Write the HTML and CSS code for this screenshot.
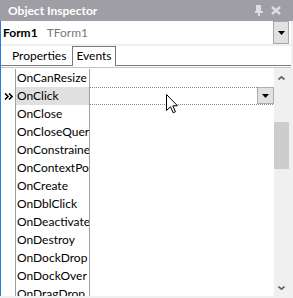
FILE: index.html
```html
<!DOCTYPE html>
<html lang="en">
<head>
    <meta charset="UTF-8">
    <title>Object Inspector</title>
    <link rel="stylesheet" href="styles.css">
</head>
<body>
    <div class="inspector">
        <div class="titlebar">
            <span class="title">Object Inspector</span>
            <div class="tools">
                <!-- pin -->
                <svg width="8" height="11" viewBox="0 0 8 11">
                    <rect x="1" y="0" width="5" height="6" fill="#dcdce0"/>
                    <rect x="0" y="6" width="8" height="2" fill="#dcdce0"/>
                    <rect x="3" y="8" width="2" height="3" fill="#dcdce0"/>
                </svg>
                <!-- close -->
                <svg width="10" height="9" viewBox="0 0 10 9">
                    <path d="M1 1 L9 8 M9 1 L1 8" stroke="#dcdce0" stroke-width="2.6" fill="none"/>
                </svg>
            </div>
        </div>
        <div class="body">
            <div class="combo">
                <span class="obj-name">Form1</span>
                <span class="obj-type">TForm1</span>
                <span class="drop">
                    <svg width="7" height="4" viewBox="0 0 7 4"><path d="M0 0 H7 L3.5 4 Z" fill="#000"/></svg>
                </span>
            </div>
            <div class="tabs">
                <span class="tab">Properties</span>
                <span class="tab active">Events</span>
            </div>
            <div class="grid-wrap">
                <div class="grid">
                    <div class="row"><span class="gutter"></span><span class="name">OnCanResize</span><span class="value"></span></div>
                    <div class="row selected">
                        <span class="gutter">
                            <svg width="9" height="7" viewBox="0 0 9 7"><path d="M1 0.5 L4 3.5 L1 6.5 M5 0.5 L8 3.5 L5 6.5" stroke="#000" stroke-width="1.6" fill="none"/></svg>
                        </span>
                        <span class="name">OnClick</span>
                        <span class="value">
                            <span class="value-drop">
                                <svg width="7" height="4" viewBox="0 0 7 4"><path d="M0 0 H7 L3.5 4 Z" fill="#000"/></svg>
                            </span>
                        </span>
                    </div>
                    <div class="row"><span class="gutter"></span><span class="name">OnClose</span><span class="value"></span></div>
                    <div class="row"><span class="gutter"></span><span class="name">OnCloseQuery</span><span class="value"></span></div>
                    <div class="row"><span class="gutter"></span><span class="name">OnConstrainedResize</span><span class="value"></span></div>
                    <div class="row"><span class="gutter"></span><span class="name">OnContextPopup</span><span class="value"></span></div>
                    <div class="row"><span class="gutter"></span><span class="name">OnCreate</span><span class="value"></span></div>
                    <div class="row"><span class="gutter"></span><span class="name">OnDblClick</span><span class="value"></span></div>
                    <div class="row"><span class="gutter"></span><span class="name">OnDeactivate</span><span class="value"></span></div>
                    <div class="row"><span class="gutter"></span><span class="name">OnDestroy</span><span class="value"></span></div>
                    <div class="row"><span class="gutter"></span><span class="name">OnDockDrop</span><span class="value"></span></div>
                    <div class="row"><span class="gutter"></span><span class="name">OnDockOver</span><span class="value"></span></div>
                    <div class="row"><span class="gutter"></span><span class="name">OnDragDrop</span><span class="value"></span></div>
                </div>
                <div class="scrollbar">
                    <span class="arrow up">
                        <svg width="7" height="4" viewBox="0 0 7 4"><path d="M0.5 3.5 L3.5 0.8 L6.5 3.5" stroke="#606060" stroke-width="1.6" fill="none"/></svg>
                    </span>
                    <span class="thumb"></span>
                    <span class="track"></span>
                    <span class="arrow down">
                        <svg width="7" height="4" viewBox="0 0 7 4"><path d="M0.5 0.5 L3.5 3.2 L6.5 0.5" stroke="#606060" stroke-width="1.6" fill="none"/></svg>
                    </span>
                </div>
            </div>
        </div>
        <!-- mouse pointer over the grid -->
        <svg class="cursor" width="13" height="20" viewBox="0 0 13 20">
            <path d="M0.5 0.5 L0.5 16.5 L4.5 12.8 L7.2 18.8 L9.4 17.8 L6.8 11.8 L11.5 11.8 Z" fill="#fff" stroke="#000" stroke-width="1"/>
        </svg>
    </div>
</body>
</html>
```

FILE: styles.css
```css
/* Panel utama */
body {
    margin: 0;
    font-family: Lato, "Noto Sans", sans-serif;
    font-size: 12px;
    color: #000;
}
.inspector {
    width: 293px;
    height: 298px;
    overflow: hidden;
    position: relative;
    background: #f0f0f0;
    display: flex;
    flex-direction: column;
}
/* Judul */
.titlebar {
    height: 21px;
    flex: none;
    background: #9f9ea5;
    color: #fff;
    display: flex;
    align-items: center;
    justify-content: space-between;
    padding: 0 12px 0 8px;
}
.title {
    font-weight: bold;
    font-size: 12px;
}
.tools {
    display: flex;
    align-items: center;
    gap: 8px;
}
.body {
    flex: 1;
    display: flex;
    flex-direction: column;
    border-left: 1px solid #2b7bd6;
    margin: 0 2px 2px 0;
    background: #fff;
    min-height: 0;
}
/* Combo objek */
.combo {
    height: 23px;
    flex: none;
    display: flex;
    align-items: center;
    padding-left: 2px;
    border-bottom: 2px solid #f0f0f0;
}
.obj-name {
    font-weight: bold;
    margin-right: 9px;
}
.obj-type {
    color: #777;
    flex: 1;
}
.drop {
    width: 14px;
    height: 21px;
    border: 1px solid #a8a8a8;
    background: #e1e1e1;
    margin-right: 2px;
    display: flex;
    align-items: center;
    justify-content: center;
}
/* Tab */
.tabs {
    height: 19px;
    flex: none;
    display: flex;
    align-items: flex-end;
    padding-left: 7px;
    border-bottom: 1px solid #7a7a7a;
}
.tab {
    padding: 0 4px;
    height: 18px;
    line-height: 17px;
    margin-right: 2px;
}
.tab.active {
    border: 1px solid #7a7a7a;
    border-bottom: none;
    background: #fff;
    padding: 0 3px;
    margin-bottom: -1px;
    height: 19px;
}
/* Grid properti */
.grid-wrap {
    flex: 1;
    display: flex;
    margin-top: 1px;
    border-top: 1px solid #c4c4c4;
    min-height: 0;
    overflow: hidden;
}
.grid {
    flex: 1;
    padding-top: 1px;
}
.row {
    display: flex;
    height: 18px;
}
.gutter {
    width: 14px;
    border-right: 1px solid #a0a0a0;
    display: flex;
    align-items: center;
    justify-content: center;
}
.name {
    width: 72px;
    padding-left: 1px;
    border-right: 1px solid #a0a0a0;
    overflow: hidden;
    white-space: nowrap;
    line-height: 17px;
}
.value {
    flex: 1;
    display: flex;
    justify-content: flex-end;
}
.selected .name {
    background: #e0e0e0;
}
.selected .value {
    background:
        linear-gradient(to right, #8a8a8a 50%, transparent 50%) top left / 2px 1px repeat-x,
        linear-gradient(to right, #8a8a8a 50%, transparent 50%) bottom left / 2px 1px repeat-x;
}
.value-drop {
    width: 15px;
    height: 15px;
    border: 1px solid #adadad;
    background: #e1e1e1;
    display: flex;
    align-items: center;
    justify-content: center;
}
/* Scrollbar */
.scrollbar {
    width: 17px;
    background: #f0f0f0;
    display: flex;
    flex-direction: column;
}
.arrow {
    display: flex;
    align-items: center;
    justify-content: center;
    padding-right: 2px;
}
.arrow.up {
    height: 20px;
}
.arrow.down {
    height: 17px;
}
.thumb {
    margin-top: 34px;
    height: 47px;
    width: 15px;
    background: #cdcdcd;
}
.track {
    flex: 1;
}
.cursor {
    position: absolute;
    left: 166px;
    top: 94px;
}
```
